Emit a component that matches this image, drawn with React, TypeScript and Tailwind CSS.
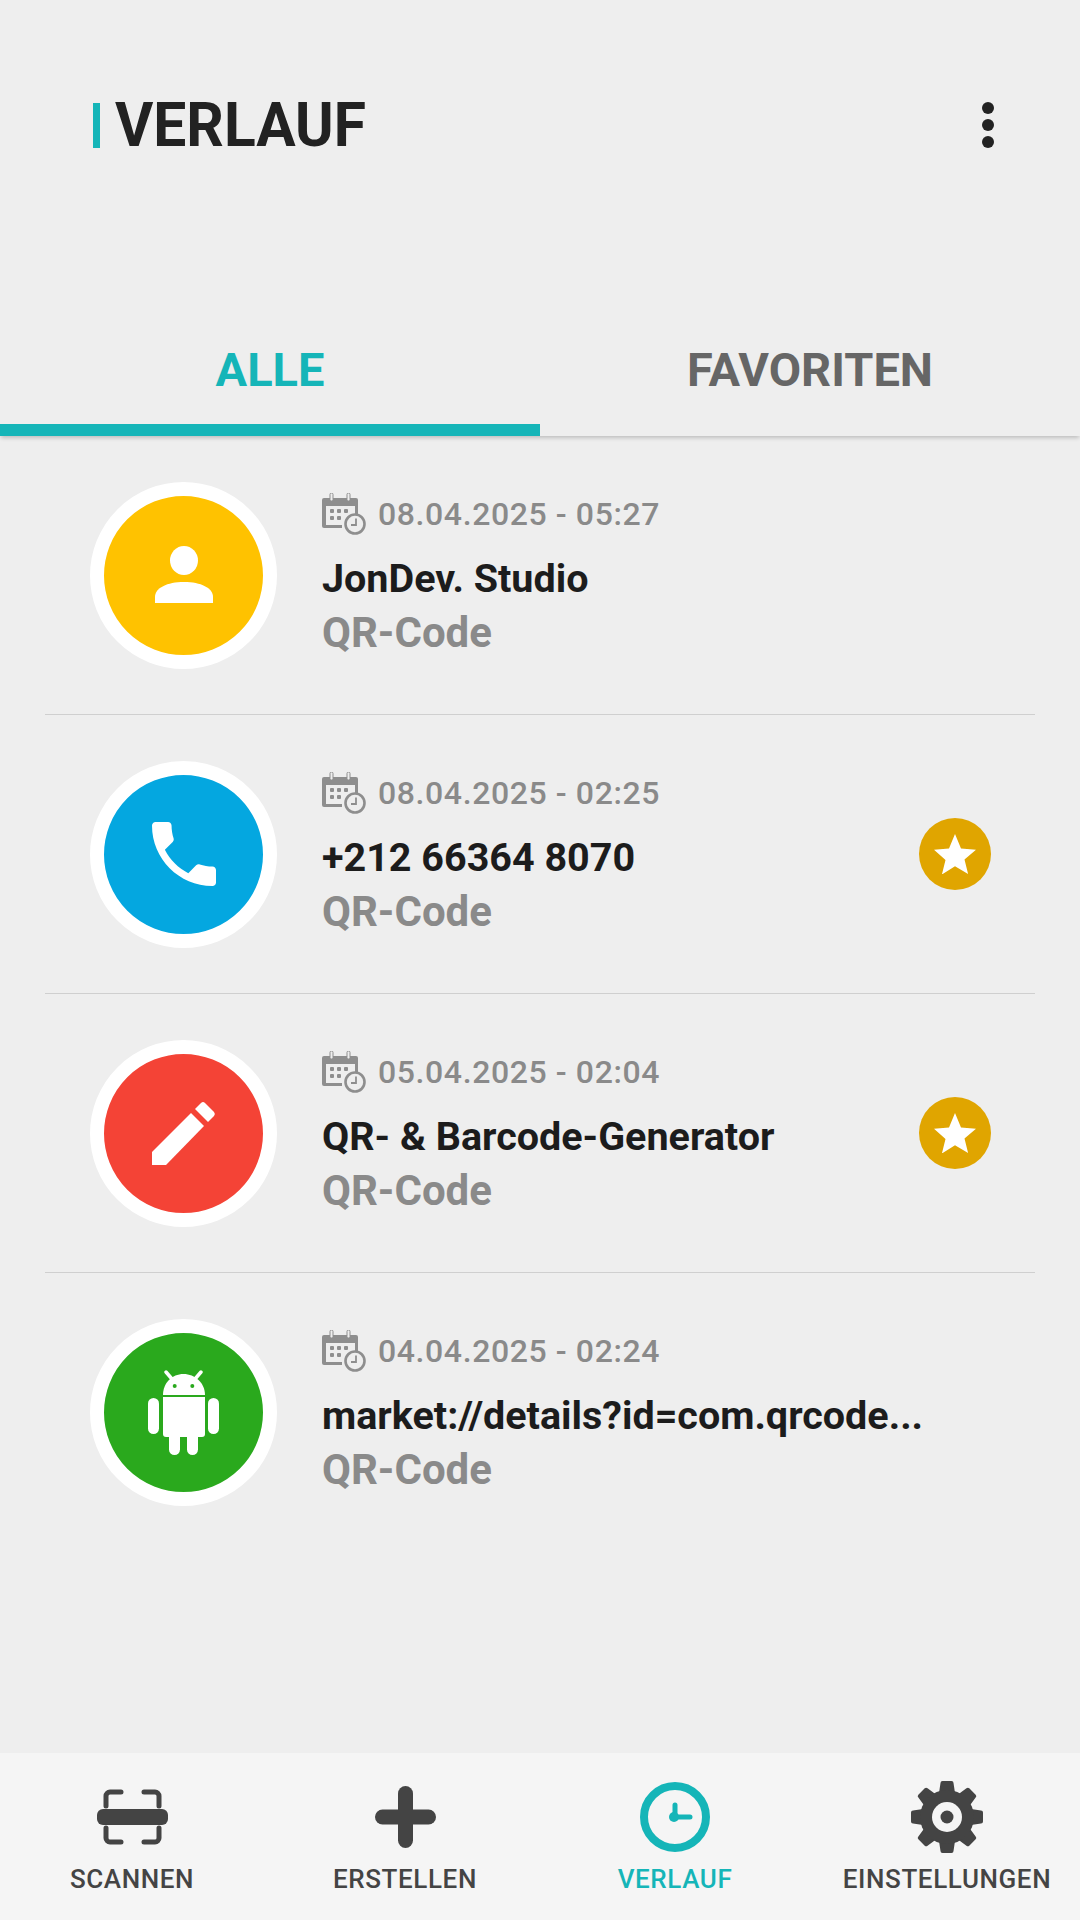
const FONT = "font-['Roboto',sans-serif]";

function CalendarIcon() {
  return (
    <svg viewBox="0 0 44 42" className="w-[44px] h-[42px] shrink-0 text-[#8e8e8e]" fill="currentColor">
      <path d="M2 5h32a2 2 0 0 1 2 2v14h-3V13H4v19h16v3H2a2 2 0 0 1-2-2V7a2 2 0 0 1 2-2z" />
      <rect x="8" y="0" width="3" height="8" rx="1.5" fill="#eeeeee" stroke="currentColor" strokeWidth="1" />
      <rect x="25" y="0" width="3" height="8" rx="1.5" fill="#eeeeee" stroke="currentColor" strokeWidth="1" />
      <rect x="8" y="16" width="4" height="4" rx="1" />
      <rect x="15" y="16" width="4" height="4" rx="1" />
      <rect x="22" y="16" width="4" height="4" rx="1" />
      <rect x="8" y="23" width="4" height="4" rx="1" />
      <rect x="15" y="23" width="4" height="4" rx="1" />
      <circle cx="33" cy="31" r="9.5" fill="#eeeeee" stroke="currentColor" strokeWidth="2.6" />
      <path d="M34 25.5V32h-5" fill="none" stroke="currentColor" strokeWidth="1.8" />
    </svg>
  );
}

function PersonIcon() {
  return (
    <svg viewBox="0 0 58 58" className="w-[58px] h-[58px]" fill="#fff">
      <ellipse cx="29" cy="14.5" rx="14" ry="14.5" />
      <path d="M0 57v-6c0-9 12-15 29-15s29 6 29 15v6z" />
    </svg>
  );
}

function PhoneIcon() {
  return (
    <svg viewBox="3 3 18 18" className="w-[64px] h-[64px]" fill="#fff">
      <path d="M6.62 10.79c1.44 2.83 3.76 5.14 6.59 6.59l2.2-2.2c.27-.27.67-.36 1.02-.24 1.12.37 2.33.57 3.57.57.55 0 1 .45 1 1V20c0 .55-.45 1-1 1-9.39 0-17-7.61-17-17 0-.55.45-1 1-1h3.5c.55 0 1 .45 1 1 0 1.25.2 2.45.57 3.57.11.35.03.74-.25 1.02l-2.2 2.2z" />
    </svg>
  );
}

function PencilIcon() {
  return (
    <svg viewBox="0 0 64 65" className="w-[64px] h-[65px]" fill="#fff">
      <path d="M0 51L39 12L52 25L14 64H0z" />
      <path d="M43 8l6-6a3 3 0 0 1 4 0l9 9a3 3 0 0 1 0 4l-6 6z" />
    </svg>
  );
}

function AndroidIcon() {
  return (
    <svg viewBox="0 0 71 85" className="w-[71px] h-[85px]" fill="#fff">
      <path d="M15 25c0-12 9-21 20.500-21S57 13 57 25z" />
      <path d="M18 2l6 7M53 2l-6 7" stroke="#fff" strokeWidth="3.500" strokeLinecap="round" />
      <circle cx="26.700" cy="16" r="2" fill="#2aa91d" />
      <circle cx="44.300" cy="16" r="2" fill="#2aa91d" />
      <path d="M15 27h42v37a3 3 0 0 1-3 3H18a3 3 0 0 1-3-3z" />
      <rect x="0" y="28" width="11" height="36" rx="5.500" />
      <rect x="60" y="28" width="11" height="36" rx="5.500" />
      <rect x="21" y="60" width="11" height="25" rx="5.500" />
      <rect x="39" y="60" width="11" height="25" rx="5.500" />
    </svg>
  );
}

function ScanIcon() {
  return (
    <svg viewBox="0 0 71 56" className="w-[71px] h-[56px]" fill="none" stroke="#444444" strokeWidth="5">
      <path d="M24 3H13a4 4 0 0 0-4 4v10M47 3h11a4 4 0 0 1 4 4v10M24 53H13a4 4 0 0 1-4-4V39M47 53h11a4 4 0 0 0 4-4V39" strokeLinecap="round" />
      <rect x="0" y="20" width="71" height="16" rx="6" fill="#444444" stroke="none" />
    </svg>
  );
}

function PlusIcon() {
  return (
    <svg viewBox="0 0 61 62" className="w-[61px] h-[62px]" fill="#444444">
      <rect x="23" y="0" width="15" height="62" rx="7.500" />
      <rect x="0" y="23.500" width="61" height="15" rx="7.500" />
    </svg>
  );
}

function ClockIcon() {
  return (
    <svg viewBox="0 0 70 70" className="w-[70px] h-[70px]" fill="none" stroke="#15b5b8">
      <circle cx="35" cy="35" r="31" strokeWidth="8" />
      <path d="M35 23v12h15" strokeWidth="5" strokeLinecap="round" strokeLinejoin="round" />
      <circle cx="34" cy="35" r="5" fill="#15b5b8" stroke="none" />
    </svg>
  );
}

function GearIcon() {
  const teeth = [0, 45, 90, 135, 180, 225, 270, 315];
  return (
    <svg viewBox="0 0 72 72" className="w-[72px] h-[72px]">
      {teeth.map((a) => (
        <path key={a} d="M28 12L29.500 2a2 2 0 0 1 2-2h9a2 2 0 0 1 2 2L44 12z" fill="#444444" transform={`rotate(${a} 36 36)`} />
      ))}
      <circle cx="36" cy="36" r="27" fill="#444444" />
      <circle cx="36" cy="36" r="15" fill="#f5f5f5" />
      <circle cx="36" cy="36" r="6.500" fill="#444444" />
    </svg>
  );
}

function StarBadge() {
  return (
    <div className="w-[72px] h-[72px] rounded-full bg-[#e0a500] flex items-center justify-center shrink-0">
      <svg viewBox="0 0 42 40" className="w-[42px] h-[40px]" fill="#fff">
        <path d="M21 0l6 14.500 15 1.200-11.500 9.800 3.600 14.500L21 32.300 7.900 40.500l3.600-14.500L0 15.700l15-1.200z" />
      </svg>
    </div>
  );
}

const rows = [
  { date: '08.04.2025 - 05:27', name: 'JonDev. Studio', color: 'bg-[#ffc200]', icon: <PersonIcon />, fav: false },
  { date: '08.04.2025 - 02:25', name: '+212 66364 8070', color: 'bg-[#04a7e0]', icon: <PhoneIcon />, fav: true },
  { date: '05.04.2025 - 02:04', name: 'QR- & Barcode-Generator', color: 'bg-[#f44336]', icon: <PencilIcon />, fav: true },
  { date: '04.04.2025 - 02:24', name: 'market://details?id=com.qrcode...', color: 'bg-[#2aa91d]', icon: <AndroidIcon />, fav: false },
];

const navItems = [
  { label: 'SCANNEN', icon: <ScanIcon />, active: false, nudge: 'pr-[6px]' },
  { label: 'ERSTELLEN', icon: <PlusIcon />, active: false, nudge: '' },
  { label: 'VERLAUF', icon: <ClockIcon />, active: true, nudge: '' },
  { label: 'EINSTELLUNGEN', icon: <GearIcon />, active: false, nudge: 'pl-[4px]' },
];

export default function App() {
  return (
    <div className={`${FONT} w-[1080px] h-[1920px] bg-[#eeeeee] flex flex-col overflow-hidden`}>
      <header className="h-[250px] shrink-0 flex items-center justify-between pl-[93px] pr-[86px]">
        <div className="flex items-center gap-[15px]">
          <div className="w-[7px] h-[45px] bg-[#15b5b8]" />
          <h1 className="text-[62px] leading-none font-bold text-[#222222] scale-x-[0.946] origin-left">VERLAUF</h1>
        </div>
        <div className="flex flex-col gap-[5px]">
          <span className="w-[12px] h-[12px] rounded-full bg-[#222222]" />
          <span className="w-[12px] h-[12px] rounded-full bg-[#222222]" />
          <span className="w-[12px] h-[12px] rounded-full bg-[#222222]" />
        </div>
      </header>

      <div className="shrink-0 mt-[62px] grid grid-cols-2 h-[124px] shadow-[0_3px_4px_-1px_rgba(0,0,0,0.2)]">
        <div className="flex items-center justify-center pt-[5px] border-b-[12px] border-[#15b5b8] text-[#15b5b8] text-[47px] font-bold">ALLE</div>
        <div className="flex items-center justify-center pt-[5px] pb-[12px] text-[#666666] text-[47px] font-bold">FAVORITEN</div>
      </div>

      <main className="flex flex-col px-[45px]">
        {rows.map((r, i) => (
          <div key={r.date} className={`h-[279px] flex items-center pl-[45px] pr-[44px] ${i < 3 ? 'border-b border-[#cfcfcf]' : ''}`}>
            <div className={`w-[187px] h-[187px] rounded-full border-[14px] border-white ${r.color} flex items-center justify-center shrink-0`}>
              {r.icon}
            </div>
            <div className="ml-[45px] flex-1 min-w-0 flex flex-col">
              <div className="flex items-center gap-[12px] h-[42px] -mt-[3px] text-[32px] leading-none font-medium text-[#8a8a8a] tracking-[0.6px]">
                <CalendarIcon />
                <span>{r.date}</span>
              </div>
              <div className="mt-[22px] text-[39.500px] leading-[44px] font-bold text-[#1c1c1c] whitespace-nowrap">{r.name}</div>
              <div className="mt-[10px] text-[42px] leading-[44px] font-bold text-[#8a8a8a]">QR-Code</div>
            </div>
            {r.fav && <StarBadge />}
          </div>
        ))}
      </main>

      <nav className="mt-auto h-[167px] shrink-0 bg-[#f5f5f5] grid grid-cols-4">
        {navItems.map((n) => (
          <div key={n.label} className={`flex flex-col items-center ${n.nudge}`}>
            <div className="h-[72px] mt-[28px] flex items-center justify-center">{n.icon}</div>
            <span className={`mt-[11px] text-[26px] leading-[30px] font-medium tracking-[0.6px] whitespace-nowrap ${n.active ? 'text-[#15b5b8]' : 'text-[#444444]'}`}>{n.label}</span>
          </div>
        ))}
      </nav>
    </div>
  );
}
